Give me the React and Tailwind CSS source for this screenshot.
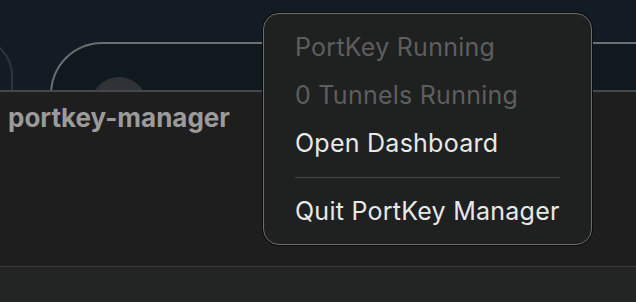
import React from "react";

const menuItems = [
  { label: "PortKey Running", disabled: true },
  { label: "0 Tunnels Running", disabled: true },
  { label: "Open Dashboard" },
];

function TrayMenu() {
  return (
    <div className="absolute left-[263px] top-[13px] w-[329px] h-[232px] rounded-[16px] border border-[#6b6d70] bg-[#1f2020] shadow-[0_0_0_1px_#0c0c0c] pt-[10px] px-[31px] flex flex-col">
      {menuItems.map((item) => (
        <div
          key={item.label}
          className={`h-[48px] flex items-center text-[25px] tracking-[0.25px] ${
            item.disabled ? "text-[#5d5e5f]" : "text-[#e8e8e8]"
          }`}
        >
          {item.label}
        </div>
      ))}
      <div className="mt-[9px] mb-[10px] h-px bg-[#454646]" />
      <div className="h-[48px] flex items-center text-[25px] tracking-[0.25px] text-[#e8e8e8]">
        Quit PortKey Manager
      </div>
    </div>
  );
}

export default function App() {
  return (
    <div
      className="relative w-[636px] h-[302px] overflow-hidden bg-[#1e1e1e] flex flex-col"
      style={{ fontFamily: "Inter, 'Noto Sans', sans-serif" }}
    >
      {/* desktop strip behind the window */}
      <div className="relative h-[90px] shrink-0 bg-[#131b24] overflow-hidden">
        <div className="absolute left-[-62px] top-[38px] w-[75px] h-[90px] rounded-full border-2 border-[#2c343c]" />
        <div className="absolute left-[50px] top-[42px] w-[620px] h-[80px] rounded-tl-[52px] border-t-2 border-l-2 border-[#6c6f72] bg-[#111920]" />
        <div className="absolute left-[91px] top-[77px] w-[56px] h-[56px] rounded-full bg-[#2f3338]" />
      </div>

      {/* window content */}
      <div className="h-[176px] shrink-0 border-t-2 border-[#45474a] bg-[#1e1e1e] px-[8px] pt-[10px]">
        <div className="text-[26px] font-bold text-[#9b9b9b] leading-[32px]">
          portkey-manager
        </div>
      </div>
      <div className="flex-1 border-t border-[#3a3b3c] bg-[#232524]" />

      <TrayMenu />
    </div>
  );
}
